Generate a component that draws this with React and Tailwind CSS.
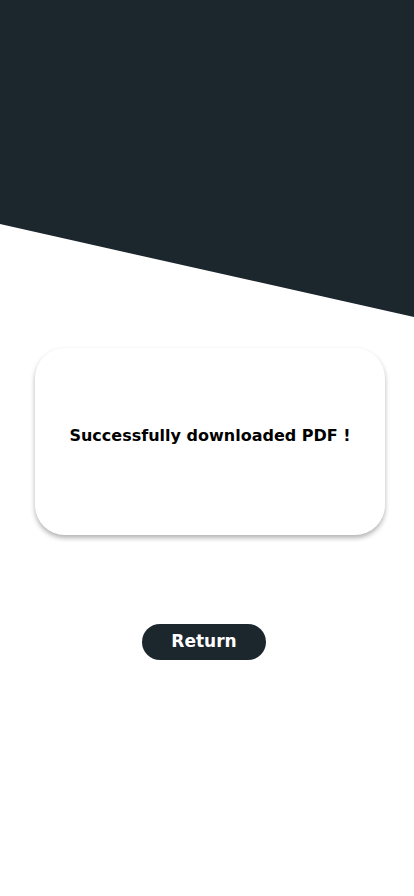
import React from "react";

export default function App() {
  return (
    <div className="min-h-[896px] w-full bg-white font-['DejaVu_Sans',sans-serif]">
      {/* slanted header */}
      <div className="h-[317px] w-full bg-[#1c262d] [clip-path:polygon(0_0,100%_0,100%_100%,0_70.7%)]"></div>

      <main className="flex flex-col">
        <div className="ml-[35px] mt-[31px] flex h-[187px] w-[350px] items-center justify-center rounded-[30px] bg-white pb-[12px] shadow-[0_3px_5px_rgba(0,0,0,0.3)]">
          <p className="text-[16px] font-bold text-black">
            Successfully downloaded PDF !
          </p>
        </div>

        <button className="ml-[142px] mt-[89px] flex h-[36px] w-[124px] items-center justify-center rounded-full bg-[#1c262d] text-[17px] font-bold text-white">
          Return
        </button>
      </main>
    </div>
  );
}
